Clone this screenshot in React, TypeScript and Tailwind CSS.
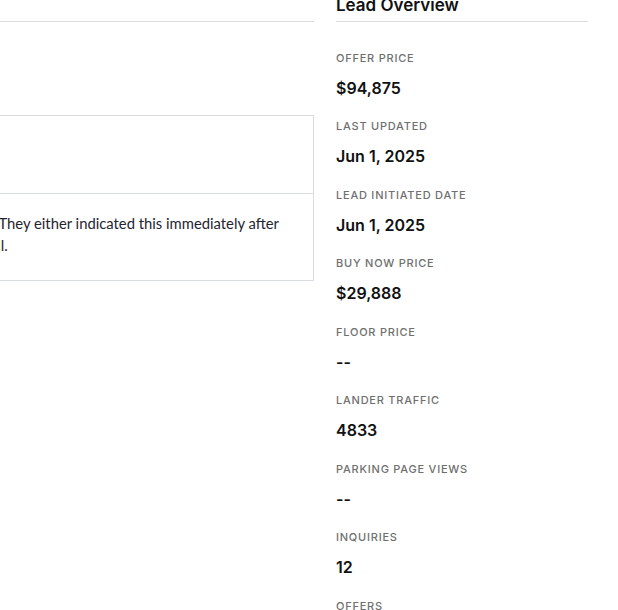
import React from "react";

type Stat = { label: string; value: string };

const stats: Stat[] = [
  { label: "Offer Price", value: "$94,875" },
  { label: "Last Updated", value: "Jun 1, 2025" },
  { label: "Lead Initiated Date", value: "Jun 1, 2025" },
  { label: "Buy Now Price", value: "$29,888" },
  { label: "Floor Price", value: "--" },
  { label: "Lander Traffic", value: "4833" },
  { label: "Parking Page Views", value: "--" },
  { label: "Inquiries", value: "12" },
  { label: "Offers", value: "3" },
];

function LeadOverview() {
  return (
    <aside className="w-[252px] shrink-0 font-['Inter',sans-serif]">
      <div className="h-[33px] border-b border-[#dcdcdc] flex items-end pb-[4px]">
        <h2 className="text-[17px] leading-6 font-semibold text-[#111]">Lead Overview</h2>
      </div>
      <dl className="pt-[9px]">
        {stats.map((s) => (
          <div key={s.label} className="pt-[18.5px]">
            <dt className="text-[11px] leading-4 font-medium uppercase tracking-[0.07em] text-[#6f6f6f]">
              {s.label}
            </dt>
            <dd className="mt-[10px] text-[16px] leading-6 font-semibold text-[#111]">{s.value}</dd>
          </div>
        ))}
      </dl>
    </aside>
  );
}

function LeadDetails() {
  return (
    <section className="w-[612px] shrink-0 font-['Lato',sans-serif] text-[#1f2430]">
      <div className="h-[33px] border-b border-[#dcdcdc] flex items-end pb-[5px] px-5">
        <h2 className="text-[17px] leading-6 font-semibold">Lead Details</h2>
      </div>
      <div className="mt-[93px] border border-[#d9dce1]">
        <div className="h-[77px] px-5 flex items-center">
          <span className="text-[15px] font-semibold">Not Interested</span>
        </div>
        <div className="border-t border-[#d9dce1] px-5 pt-[18px] pb-[24px] text-[14.8px] leading-[22px] whitespace-nowrap">
          <p>The buyer is not interested in this domain. They either indicated this immediately after</p>
          <p>receiving our outreach or later on via e-mail.</p>
        </div>
      </div>
    </section>
  );
}

export default function App() {
  return (
    <div className="w-[618px] h-[610px] overflow-hidden bg-white">
      <div className="flex gap-[22px] -mt-[11px] -ml-[298px]">
        <LeadDetails />
        <LeadOverview />
      </div>
    </div>
  );
}
